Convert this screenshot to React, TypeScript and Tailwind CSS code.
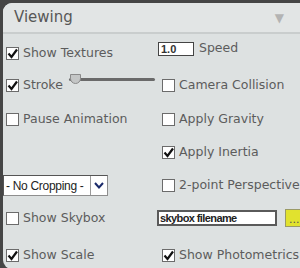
import React from 'react';

const Box: React.FC<{ checked?: boolean }> = ({ checked }) => (
  <span className="relative inline-block w-[13px] h-[13px] shrink-0 bg-white border border-[#6b6b6b]">
    {checked && (
      <svg viewBox="0 0 13 13" className="absolute -left-px -top-px w-[13px] h-[13px]">
        <path d="M2.5 6.5 L5.5 10 L11 2.5" fill="none" stroke="#111" strokeWidth="2.2" />
      </svg>
    )}
  </span>
);

const Check: React.FC<{ label: string; checked?: boolean }> = ({ label, checked }) => (
  <label className="flex items-center gap-[4px] whitespace-nowrap">
    <Box checked={checked} />
    <span>{label}</span>
  </label>
);

const App: React.FC = () => {
  return (
    <div className="w-[300px] h-[268px] overflow-hidden bg-[#454545] pt-[3px] pl-[3px]">
      <div
        className="w-[310px] h-[266px] rounded-tl-[9px] rounded-bl-[9px] bg-[#dde1e1] text-[#5c5c5c] text-[12.5px]"
        style={{ fontFamily: '"DejaVu Sans", Verdana, sans-serif' }}
      >
        {/* Header */}
        <div className="h-[31px] flex items-center justify-between pl-[11px] pr-[29px] bg-[#e2e5e5] rounded-tl-[9px] border-b-2 border-[#c9cdcd]">
          <span className="text-[15px] text-[#575757]">Viewing</span>
          <span className="text-[12px] text-[#b3b3b3]">▼</span>
        </div>

        {/* Body */}
        <div className="grid grid-cols-[155px_1fr] pt-[3px]">
          {/* row 1 */}
          <div className="h-[32px] flex items-center pl-[3px] pt-[1px]">
            <Check label="Show Textures" checked />
          </div>
          <div className="h-[32px] flex items-start pt-[5px] gap-[5px]">
            <div className="w-[36px] h-[14px] bg-white border border-[#444] text-[11px] font-bold text-[#333] leading-[12px] pl-[2px]" style={{ fontFamily: '"Liberation Sans", Arial, sans-serif' }}>
              1.0
            </div>
            <span className="leading-[12px]">Speed</span>
          </div>

          {/* row 2 */}
          <div className="h-[33px] flex items-center pl-[3px] gap-[6px]">
            <Check label="Stroke" checked />
            <div className="relative w-[86px] h-[12px] -mt-[12px]">
              <div className="absolute left-0 right-0 top-[4px] h-[3px] rounded-full bg-[#6a6a6a]" />
              <div className="absolute left-[1px] top-0 w-[11px] h-[10px] rounded-b-full bg-[#c4c6c6] border border-[#8a8a8a]" />
            </div>
          </div>
          <div className="h-[33px] flex items-center pl-[4px]">
            <Check label="Camera Collision" />
          </div>

          {/* row 3 */}
          <div className="h-[34px] flex items-center pl-[3px]">
            <Check label="Pause Animation" />
          </div>
          <div className="h-[34px] flex items-center pl-[4px]">
            <Check label="Apply Gravity" />
          </div>

          {/* row 4 */}
          <div className="h-[33px]" />
          <div className="h-[33px] flex items-center pl-[4px]">
            <Check label="Apply Inertia" checked />
          </div>

          {/* row 5 */}
          <div className="h-[33px] flex items-center pl-0">
            <div
              className="flex items-stretch w-[105px] h-[21px] bg-white border border-[#8e8e8e] border-t-[#555] border-l-[#555] text-[12px] text-[#222]"
              style={{ fontFamily: '"Liberation Sans", Arial, sans-serif' }}
            >
              <span className="flex-1 flex items-center pl-[2px] tracking-[-0.3px]">- No Cropping -</span>
              <span className="w-[17px] flex items-center justify-center border-l border-[#9a9a9a]">
                <svg viewBox="0 0 10 7" className="w-[10px] h-[7px]">
                  <path d="M1 1 L5 5.5 L9 1" fill="none" stroke="#1a2a6a" strokeWidth="2" />
                </svg>
              </span>
            </div>
          </div>
          <div className="h-[33px] flex items-center pl-[4px]">
            <Check label="2-point Perspective" />
          </div>

          {/* row 6 */}
          <div className="h-[32px] flex items-center pl-[3px]">
            <Check label="Show Skybox" />
          </div>
          <div className="h-[32px] flex items-center -ml-[1px] gap-[8px]">
            <div
              className="w-[120px] h-[16px] bg-white border-2 border-[#5a5a5a] text-[11px] text-[#222] font-bold leading-[12px] pl-[1px] tracking-[-0.6px]"
              style={{ fontFamily: '"Liberation Sans", Arial, sans-serif' }}
            >
              skybox filename
            </div>
            <div className="w-[22px] h-[18px] bg-[#e1e22e] border border-[#9a9a66] text-[#555] text-[11px] leading-[20px] pl-[3px]">
              ...
            </div>
          </div>

          {/* row 7 */}
          <div className="h-[40px] flex items-center pl-[3px] pt-[2px]">
            <Check label="Show Scale" checked />
          </div>
          <div className="h-[40px] flex items-center pl-[4px] pt-[2px]">
            <Check label="Show Photometrics" checked />
          </div>
        </div>
      </div>
    </div>
  );
};

export default App;
